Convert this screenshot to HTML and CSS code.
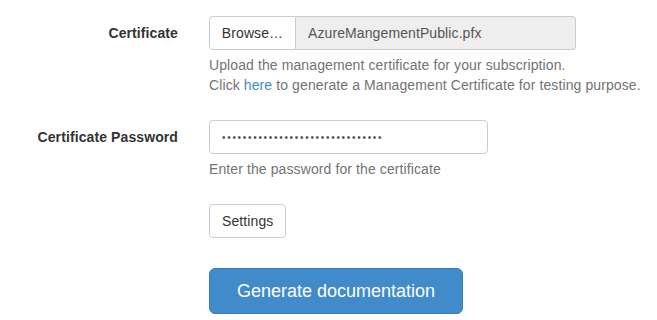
FILE: index.html
```html
<!DOCTYPE html>
<html lang="en">
<head>
    <meta charset="UTF-8">
    <meta name="viewport" content="width=device-width, initial-scale=1.0">
    <title>Generate Documentation</title>
    <link rel="stylesheet" href="styles.css">
</head>
<body>

    <form class="form-horizontal">
        <div class="form-group">
            <label class="control-label">Certificate</label>
            <div class="controls">
                <div class="file-group">
                    <span class="btn-browse">Browse&hellip;</span>
                    <input type="text" class="file-name" value="AzureMangementPublic.pfx" readonly>
                </div>
                <p class="help-block">
                    Upload the management certificate for your subscription.<br>
                    Click <a href="#">here</a> to generate a Management Certificate for testing purpose.
                </p>
            </div>
        </div>

        <div class="form-group">
            <label class="control-label">Certificate Password</label>
            <div class="controls">
                <input type="password" class="form-control password" value="0123456789012345678901234567890">
                <p class="help-block">Enter the password for the certificate</p>
            </div>
        </div>

        <div class="form-group">
            <div class="control-label"></div>
            <div class="controls">
                <button type="button" class="btn">Settings</button>
            </div>
        </div>

        <div class="form-group form-submit">
            <div class="control-label"></div>
            <div class="controls">
                <button type="button" class="btn btn-primary btn-lg">Generate documentation</button>
            </div>
        </div>
    </form>

</body>
</html>
```

FILE: styles.css
```css
body {
    font-family: "Liberation Sans", Arial, sans-serif;
    font-size: 14px;
    line-height: 20px;
    letter-spacing: 0.1px;
    color: #333;
    background-color: #fff;
    margin: 0;
}

.form-horizontal {
    padding-top: 16px;
}

.form-group {
    display: flex;
    margin-bottom: 15px;
}

.form-submit {
    margin-top: 30px;
}

.control-label {
    width: 178px;
    flex-shrink: 0;
    text-align: right;
    font-weight: bold;
    padding-top: 7px;
    margin-right: 31px;
}

.controls {
    flex: 1;
}

.file-group {
    display: flex;
    width: 367px;
    height: 34px;
}

.btn-browse {
    box-sizing: border-box;
    width: 87px;
    padding: 6px 0;
    text-align: center;
    border: 1px solid #ccc;
    border-radius: 4px 0 0 4px;
    background-color: #fff;
    color: #333;
}

.file-name {
    flex: 1;
    box-sizing: border-box;
    height: 34px;
    padding: 6px 12px;
    font-family: inherit;
    font-size: 14px;
    letter-spacing: 0.1px;
    color: #555;
    background-color: #eee;
    border: 1px solid #ccc;
    border-left: none;
    border-radius: 0 4px 4px 0;
    outline: none;
}

.form-control {
    display: block;
    box-sizing: border-box;
    height: 34px;
    padding: 6px 12px;
    font-family: inherit;
    font-size: 14px;
    color: #555;
    background-color: #fff;
    border: 1px solid #ccc;
    border-radius: 4px;
    outline: none;
}

.password {
    width: 279px;
    font-size: 10px;
    letter-spacing: 1.7px;
}

.help-block {
    color: #737373;
    margin: 5px 0 10px;
}

.help-block a {
    color: #428bca;
    text-decoration: none;
}

.btn {
    font-family: inherit;
    font-size: 14px;
    line-height: 20px;
    letter-spacing: 0.1px;
    padding: 6px 12px;
    color: #333;
    background-color: #fff;
    border: 1px solid #ccc;
    border-radius: 4px;
    cursor: pointer;
}

.btn-primary {
    color: #fff;
    background-color: #428bca;
    border-color: #357ebd;
}

.btn-lg {
    font-size: 18px;
    line-height: 24px;
    letter-spacing: 0;
    padding: 10px 27px;
    border-radius: 6px;
}
```
